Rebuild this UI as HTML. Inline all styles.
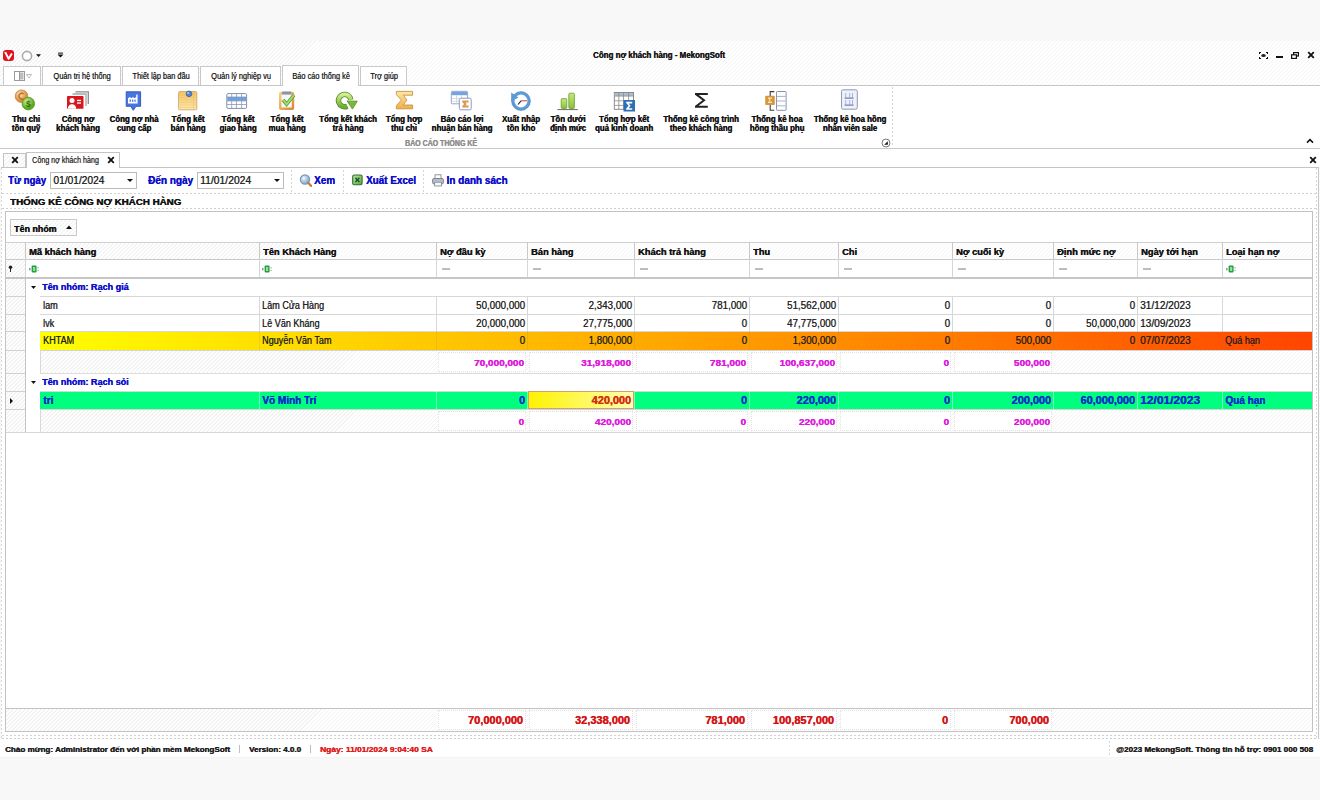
<!DOCTYPE html><html><head><meta charset="utf-8"><style>
*{margin:0;padding:0;box-sizing:border-box}
html,body{width:1320px;height:800px;overflow:hidden;background:#f8f8f8;font-family:"Liberation Sans",sans-serif;color:#000}
div{position:absolute;white-space:nowrap}
</style></head><body>
<div style="left:0px;top:41px;width:1320px;height:45px;background:repeating-linear-gradient(135deg,#ffffff 0px,#ffffff 2.0px,#f5f5f5 2.0px,#f5f5f5 2.83px);"></div>
<div style="left:3px;top:50px;width:11px;height:11px;background:#e0141e;border-radius:3px;"></div>
<svg style="position:absolute;left:3px;top:50px" width="11" height="11" viewBox="0 0 11 11"><path d="M2.4 2.6L5.6 8.8L8.9 3.4" stroke="#fff" stroke-width="1.9" fill="none" stroke-linejoin="round"/><path d="M1.6 2.2L3.6 3.4" stroke="#fff" stroke-width="1.2"/></svg>
<svg style="position:absolute;left:21px;top:50px" width="12" height="12" viewBox="0 0 12 12"><circle cx="6" cy="6" r="4.6" fill="#fff" stroke="#ababab" stroke-width="1.6"/></svg>
<svg style="position:absolute;left:36px;top:54px" width="6" height="4" viewBox="0 0 6 4"><path d="M0 0.3H5L2.5 3Z" fill="#111"/></svg>
<svg style="position:absolute;left:57px;top:52px" width="7" height="6" viewBox="0 0 7 6"><rect x="1" y="0.6" width="5" height="1" fill="#111"/><path d="M0.5 2.6H6.5L3.5 5.6Z" fill="#111"/></svg>
<div style="text-shadow:0.4px 0 0 #141414cc,0 0.25px 0 #14141466;left:593.30px;top:49.19px;width:400px;height:12.32px;line-height:12.32px;text-align:left;font-size:8.8px;font-weight:bold;color:#141414;transform:scaleX(0.904);transform-origin:left center;">Công nợ khách hàng - MekongSoft</div>
<svg style="position:absolute;left:1259px;top:52px" width="9" height="7" viewBox="0 0 9 7"><path d="M0.5 2V0.5H2M7 0.5H8.5V2M8.5 5V6.5H7M2 6.5H0.5V5" stroke="#111" stroke-width="1.1" fill="none"/><ellipse cx="4.5" cy="3.5" rx="2.3" ry="1.6" fill="#222"/></svg>
<div style="left:1276px;top:56px;width:7px;height:2px;background:#111;"></div>
<svg style="position:absolute;left:1291px;top:52px" width="8" height="7" viewBox="0 0 8 7"><rect x="2.6" y="0.6" width="4.8" height="3.4" stroke="#111" stroke-width="1.2" fill="#fff"/><rect x="0.6" y="2.8" width="4.8" height="3.6" stroke="#111" stroke-width="1.2" fill="#fff"/></svg>
<svg style="position:absolute;left:1307px;top:51px" width="8" height="8" viewBox="0 0 8 8"><path d="M1.2 1.2L6.8 6.8M6.8 1.2L1.2 6.8" stroke="#111" stroke-width="1.8"/></svg>
<div style="left:3px;top:66px;width:38px;height:20px;background:#fff;border:1px solid #c9c9c9;border-bottom:none;"></div>
<svg style="position:absolute;left:14px;top:71px" width="18" height="10" viewBox="0 0 18 10"><rect x="0.5" y="0.5" width="10" height="9" fill="#fff" stroke="#9a9a9a"/><rect x="5.5" y="1.5" width="4" height="7" fill="#bdbdbd"/><line x1="5.5" y1="0.5" x2="5.5" y2="9.5" stroke="#9a9a9a"/><path d="M12.5 3.5H17.5L15 7Z" fill="none" stroke="#a8a8a8" stroke-width="0.8"/></svg>
<div style="left:42px;top:66px;width:79px;height:20px;background:#fff;border:1px solid #c9c9c9;border-bottom:none;"></div>
<div style="text-shadow:0.4px 0 0 #1a1a1abb;left:-118.50px;top:71.01px;width:400px;height:11.76px;line-height:11.76px;text-align:center;font-size:8.4px;font-weight:normal;color:#1a1a1a;transform:scaleX(0.885);transform-origin:center center;">Quản trị hệ thống</div>
<div style="left:122px;top:66px;width:77px;height:20px;background:#fff;border:1px solid #c9c9c9;border-bottom:none;"></div>
<div style="text-shadow:0.4px 0 0 #1a1a1abb;left:-39.50px;top:71.01px;width:400px;height:11.76px;line-height:11.76px;text-align:center;font-size:8.4px;font-weight:normal;color:#1a1a1a;transform:scaleX(0.885);transform-origin:center center;">Thiết lập ban đầu</div>
<div style="left:200px;top:66px;width:81px;height:20px;background:#fff;border:1px solid #c9c9c9;border-bottom:none;"></div>
<div style="text-shadow:0.4px 0 0 #1a1a1abb;left:40.50px;top:71.01px;width:400px;height:11.76px;line-height:11.76px;text-align:center;font-size:8.4px;font-weight:normal;color:#1a1a1a;transform:scaleX(0.885);transform-origin:center center;">Quản lý nghiệp vụ</div>
<div style="left:282px;top:65px;width:77px;height:21px;background:#fff;border:1px solid #c9c9c9;border-bottom:none;"></div>
<div style="text-shadow:0.4px 0 0 #1a1a1abb;left:120.50px;top:71.01px;width:400px;height:11.76px;line-height:11.76px;text-align:center;font-size:8.4px;font-weight:normal;color:#1a1a1a;transform:scaleX(0.885);transform-origin:center center;">Báo cáo thống kê</div>
<div style="left:360px;top:66px;width:47px;height:20px;background:#fff;border:1px solid #c9c9c9;border-bottom:none;"></div>
<div style="text-shadow:0.4px 0 0 #1a1a1abb;left:183.50px;top:71.01px;width:400px;height:11.76px;line-height:11.76px;text-align:center;font-size:8.4px;font-weight:normal;color:#1a1a1a;transform:scaleX(0.885);transform-origin:center center;">Trợ giúp</div>
<div style="left:0px;top:85px;width:1320px;height:64px;background:#fff;border-top:1px solid #c6c6c6;border-bottom:1px solid #c8c8c8;"></div>
<div style="left:283px;top:84px;width:75px;height:2px;background:#fff;"></div>
<div style="left:892px;top:87px;width:1px;height:60px;background:repeating-linear-gradient(180deg,#d6d6d6 0px,#d6d6d6 2px,transparent 2px,transparent 4px);"></div>
<div style="text-shadow:0.4px 0 0 #8e8e8ecc,0 0.25px 0 #8e8e8e66;left:241.00px;top:137.62px;width:400px;height:11.48px;line-height:11.48px;text-align:center;font-size:8.2px;font-weight:bold;color:#8e8e8e;transform:scaleX(0.856);transform-origin:center center;">BÁO CÁO THỐNG KÊ</div>
<svg style="position:absolute;left:881px;top:138px" width="10" height="10" viewBox="0 0 10 10"><circle cx="5" cy="5" r="4" fill="#fff" stroke="#6a6a6a" stroke-width="0.9"/><path d="M3.2 6.8H6.8V3.2Z" fill="#111"/></svg>
<svg style="position:absolute;left:1306px;top:138px" width="8" height="6" viewBox="0 0 8 6"><path d="M1 4.6L4 1.6L7 4.6" stroke="#111" stroke-width="1.5" fill="none"/></svg>
<div style="text-shadow:0.4px 0 0 #111111cc,0 0.25px 0 #11111166;left:-174.40px;top:114.31px;width:400px;height:11.76px;line-height:11.76px;text-align:center;font-size:8.4px;font-weight:bold;color:#111111;transform:scaleX(0.940);transform-origin:center center;">Thu chi</div>
<div style="text-shadow:0.4px 0 0 #111111cc,0 0.25px 0 #11111166;left:-174.40px;top:123.31px;width:400px;height:11.76px;line-height:11.76px;text-align:center;font-size:8.4px;font-weight:bold;color:#111111;transform:scaleX(0.940);transform-origin:center center;">tồn quỹ</div>
<div style="text-shadow:0.4px 0 0 #111111cc,0 0.25px 0 #11111166;left:-122.40px;top:114.31px;width:400px;height:11.76px;line-height:11.76px;text-align:center;font-size:8.4px;font-weight:bold;color:#111111;transform:scaleX(0.940);transform-origin:center center;">Công nợ</div>
<div style="text-shadow:0.4px 0 0 #111111cc,0 0.25px 0 #11111166;left:-122.40px;top:123.31px;width:400px;height:11.76px;line-height:11.76px;text-align:center;font-size:8.4px;font-weight:bold;color:#111111;transform:scaleX(0.940);transform-origin:center center;">khách hàng</div>
<div style="text-shadow:0.4px 0 0 #111111cc,0 0.25px 0 #11111166;left:-66.50px;top:114.31px;width:400px;height:11.76px;line-height:11.76px;text-align:center;font-size:8.4px;font-weight:bold;color:#111111;transform:scaleX(0.940);transform-origin:center center;">Công nợ nhà</div>
<div style="text-shadow:0.4px 0 0 #111111cc,0 0.25px 0 #11111166;left:-66.50px;top:123.31px;width:400px;height:11.76px;line-height:11.76px;text-align:center;font-size:8.4px;font-weight:bold;color:#111111;transform:scaleX(0.940);transform-origin:center center;">cung cấp</div>
<div style="text-shadow:0.4px 0 0 #111111cc,0 0.25px 0 #11111166;left:-12.40px;top:114.31px;width:400px;height:11.76px;line-height:11.76px;text-align:center;font-size:8.4px;font-weight:bold;color:#111111;transform:scaleX(0.940);transform-origin:center center;">Tổng kết</div>
<div style="text-shadow:0.4px 0 0 #111111cc,0 0.25px 0 #11111166;left:-12.40px;top:123.31px;width:400px;height:11.76px;line-height:11.76px;text-align:center;font-size:8.4px;font-weight:bold;color:#111111;transform:scaleX(0.940);transform-origin:center center;">bán hàng</div>
<div style="text-shadow:0.4px 0 0 #111111cc,0 0.25px 0 #11111166;left:37.50px;top:114.31px;width:400px;height:11.76px;line-height:11.76px;text-align:center;font-size:8.4px;font-weight:bold;color:#111111;transform:scaleX(0.940);transform-origin:center center;">Tổng kết</div>
<div style="text-shadow:0.4px 0 0 #111111cc,0 0.25px 0 #11111166;left:37.50px;top:123.31px;width:400px;height:11.76px;line-height:11.76px;text-align:center;font-size:8.4px;font-weight:bold;color:#111111;transform:scaleX(0.940);transform-origin:center center;">giao hàng</div>
<div style="text-shadow:0.4px 0 0 #111111cc,0 0.25px 0 #11111166;left:86.50px;top:114.31px;width:400px;height:11.76px;line-height:11.76px;text-align:center;font-size:8.4px;font-weight:bold;color:#111111;transform:scaleX(0.940);transform-origin:center center;">Tổng kết</div>
<div style="text-shadow:0.4px 0 0 #111111cc,0 0.25px 0 #11111166;left:86.50px;top:123.31px;width:400px;height:11.76px;line-height:11.76px;text-align:center;font-size:8.4px;font-weight:bold;color:#111111;transform:scaleX(0.940);transform-origin:center center;">mua hàng</div>
<div style="text-shadow:0.4px 0 0 #111111cc,0 0.25px 0 #11111166;left:147.50px;top:114.31px;width:400px;height:11.76px;line-height:11.76px;text-align:center;font-size:8.4px;font-weight:bold;color:#111111;transform:scaleX(0.940);transform-origin:center center;">Tổng kết khách</div>
<div style="text-shadow:0.4px 0 0 #111111cc,0 0.25px 0 #11111166;left:147.50px;top:123.31px;width:400px;height:11.76px;line-height:11.76px;text-align:center;font-size:8.4px;font-weight:bold;color:#111111;transform:scaleX(0.940);transform-origin:center center;">trả hàng</div>
<div style="text-shadow:0.4px 0 0 #111111cc,0 0.25px 0 #11111166;left:204.00px;top:114.31px;width:400px;height:11.76px;line-height:11.76px;text-align:center;font-size:8.4px;font-weight:bold;color:#111111;transform:scaleX(0.940);transform-origin:center center;">Tổng hợp</div>
<div style="text-shadow:0.4px 0 0 #111111cc,0 0.25px 0 #11111166;left:204.00px;top:123.31px;width:400px;height:11.76px;line-height:11.76px;text-align:center;font-size:8.4px;font-weight:bold;color:#111111;transform:scaleX(0.940);transform-origin:center center;">thu chi</div>
<div style="text-shadow:0.4px 0 0 #111111cc,0 0.25px 0 #11111166;left:262.00px;top:114.31px;width:400px;height:11.76px;line-height:11.76px;text-align:center;font-size:8.4px;font-weight:bold;color:#111111;transform:scaleX(0.940);transform-origin:center center;">Báo cáo lợi</div>
<div style="text-shadow:0.4px 0 0 #111111cc,0 0.25px 0 #11111166;left:262.00px;top:123.31px;width:400px;height:11.76px;line-height:11.76px;text-align:center;font-size:8.4px;font-weight:bold;color:#111111;transform:scaleX(0.940);transform-origin:center center;">nhuận bán hàng</div>
<div style="text-shadow:0.4px 0 0 #111111cc,0 0.25px 0 #11111166;left:321.00px;top:114.31px;width:400px;height:11.76px;line-height:11.76px;text-align:center;font-size:8.4px;font-weight:bold;color:#111111;transform:scaleX(0.940);transform-origin:center center;">Xuất nhập</div>
<div style="text-shadow:0.4px 0 0 #111111cc,0 0.25px 0 #11111166;left:321.00px;top:123.31px;width:400px;height:11.76px;line-height:11.76px;text-align:center;font-size:8.4px;font-weight:bold;color:#111111;transform:scaleX(0.940);transform-origin:center center;">tồn kho</div>
<div style="text-shadow:0.4px 0 0 #111111cc,0 0.25px 0 #11111166;left:367.80px;top:114.31px;width:400px;height:11.76px;line-height:11.76px;text-align:center;font-size:8.4px;font-weight:bold;color:#111111;transform:scaleX(0.940);transform-origin:center center;">Tồn dưới</div>
<div style="text-shadow:0.4px 0 0 #111111cc,0 0.25px 0 #11111166;left:367.80px;top:123.31px;width:400px;height:11.76px;line-height:11.76px;text-align:center;font-size:8.4px;font-weight:bold;color:#111111;transform:scaleX(0.940);transform-origin:center center;">định mức</div>
<div style="text-shadow:0.4px 0 0 #111111cc,0 0.25px 0 #11111166;left:424.00px;top:114.31px;width:400px;height:11.76px;line-height:11.76px;text-align:center;font-size:8.4px;font-weight:bold;color:#111111;transform:scaleX(0.940);transform-origin:center center;">Tổng hợp kết</div>
<div style="text-shadow:0.4px 0 0 #111111cc,0 0.25px 0 #11111166;left:424.00px;top:123.31px;width:400px;height:11.76px;line-height:11.76px;text-align:center;font-size:8.4px;font-weight:bold;color:#111111;transform:scaleX(0.940);transform-origin:center center;">quả kinh doanh</div>
<div style="text-shadow:0.4px 0 0 #111111cc,0 0.25px 0 #11111166;left:501.00px;top:114.31px;width:400px;height:11.76px;line-height:11.76px;text-align:center;font-size:8.4px;font-weight:bold;color:#111111;transform:scaleX(0.940);transform-origin:center center;">Thống kê công trình</div>
<div style="text-shadow:0.4px 0 0 #111111cc,0 0.25px 0 #11111166;left:501.00px;top:123.31px;width:400px;height:11.76px;line-height:11.76px;text-align:center;font-size:8.4px;font-weight:bold;color:#111111;transform:scaleX(0.940);transform-origin:center center;">theo khách hàng</div>
<div style="text-shadow:0.4px 0 0 #111111cc,0 0.25px 0 #11111166;left:576.60px;top:114.31px;width:400px;height:11.76px;line-height:11.76px;text-align:center;font-size:8.4px;font-weight:bold;color:#111111;transform:scaleX(0.940);transform-origin:center center;">Thống kê hoa</div>
<div style="text-shadow:0.4px 0 0 #111111cc,0 0.25px 0 #11111166;left:576.60px;top:123.31px;width:400px;height:11.76px;line-height:11.76px;text-align:center;font-size:8.4px;font-weight:bold;color:#111111;transform:scaleX(0.940);transform-origin:center center;">hồng thầu phụ</div>
<div style="text-shadow:0.4px 0 0 #111111cc,0 0.25px 0 #11111166;left:650.00px;top:114.31px;width:400px;height:11.76px;line-height:11.76px;text-align:center;font-size:8.4px;font-weight:bold;color:#111111;transform:scaleX(0.940);transform-origin:center center;">Thống kê hoa hồng</div>
<div style="text-shadow:0.4px 0 0 #111111cc,0 0.25px 0 #11111166;left:650.00px;top:123.31px;width:400px;height:11.76px;line-height:11.76px;text-align:center;font-size:8.4px;font-weight:bold;color:#111111;transform:scaleX(0.940);transform-origin:center center;">nhân viên sale</div>
<svg style="position:absolute;left:12px;top:88px" width="24" height="24" viewBox="0 0 24 24"><g transform="translate(-12,-88)"><defs><radialGradient id="g1" cx="40%" cy="35%"><stop offset="0" stop-color="#fde6bc"/><stop offset="1" stop-color="#dc8e40"/></radialGradient>
<radialGradient id="g2" cx="40%" cy="35%"><stop offset="0" stop-color="#d4f29a"/><stop offset="1" stop-color="#5ea822"/></radialGradient></defs>
<circle cx="21.5" cy="96.2" r="6.3" fill="url(#g1)" stroke="#cc8338" stroke-width="0.8"/>
<path d="M23.6 93.8A2.9 2.9 0 1 0 23.6 98.6" stroke="#b86e24" stroke-width="1.4" fill="none"/>
<circle cx="28.3" cy="103.6" r="6.3" fill="url(#g2)" stroke="#4f9a1c" stroke-width="0.8"/>
<text x="28.3" y="106.8" font-size="8.5" text-anchor="middle" fill="#2f6d0c" font-family="Liberation Sans" font-weight="bold">$</text></g></svg>
<svg style="position:absolute;left:65px;top:90px" width="26" height="21" viewBox="0 0 26 21"><g transform="translate(-65,-90)"><path d="M75.5 91.8H88.3V104" fill="none" stroke="#8c8c8c" stroke-width="1.3"/>
<path d="M72.5 94H86V106" fill="none" stroke="#a6a6a6" stroke-width="1.3"/>
<rect x="67" y="96" width="16.5" height="12.8" fill="#d8161e" rx="0.8"/>
<circle cx="72" cy="100.4" r="2.5" fill="#fff"/><path d="M67.8 108.8C68 105.4 70 104.2 72 104.2C74 104.2 76 105.4 76.2 108.8Z" fill="#fff"/>
<rect x="77" y="99.8" width="4" height="1.3" fill="#fff"/><rect x="77" y="102.4" width="4" height="1.3" fill="#fff"/></g></svg>
<svg style="position:absolute;left:124px;top:90px" width="19" height="22" viewBox="0 0 19 22"><g transform="translate(-124,-90)"><path d="M126.2 91.8H140.6V106.3H136L133.3 110.3L130.6 106.3H126.2Z" fill="#4676e0" stroke="#2f52b4" stroke-width="0.9" stroke-linejoin="round"/>
<path d="M128 103.6V98.2L130 97L131.5 98.2L133 97L134.5 98.2L136.2 97V94.6H137.6V103.6Z" fill="#fff"/>
<rect x="129.6" y="99.6" width="1.3" height="2.2" fill="#4676e0"/><rect x="132" y="99.6" width="1.3" height="2.2" fill="#4676e0"/><rect x="134.4" y="99.6" width="1.3" height="2.2" fill="#4676e0"/></g></svg>
<svg style="position:absolute;left:177px;top:89px" width="22" height="23" viewBox="0 0 22 23"><g transform="translate(-177,-89)"><defs><linearGradient id="g3" x1="0" y1="0" x2="0" y2="1"><stop offset="0" stop-color="#f6c462"/><stop offset="1" stop-color="#fde9ae"/></linearGradient></defs>
<rect x="178.6" y="91.6" width="18.2" height="18.2" fill="url(#g3)" stroke="#d4ac70" stroke-width="1" rx="1"/>
<g stroke="#eab868" stroke-width="0.5" opacity="0.8"><line x1="180" y1="95" x2="195.5" y2="95"/><line x1="180" y1="97.5" x2="195.5" y2="97.5"/><line x1="180" y1="100" x2="195.5" y2="100"/><line x1="180" y1="102.5" x2="195.5" y2="102.5"/><line x1="180" y1="105" x2="195.5" y2="105"/><line x1="180" y1="107.5" x2="195.5" y2="107.5"/><line x1="193.5" y1="93" x2="193.5" y2="109"/></g>
<circle cx="189" cy="93.8" r="2.9" fill="#4f86cc" stroke="#2d5590" stroke-width="0.6"/><circle cx="188.2" cy="93" r="1" fill="#a8d0f0"/></g></svg>
<svg style="position:absolute;left:225px;top:92px" width="23" height="18" viewBox="0 0 23 18"><g transform="translate(-225,-92)"><rect x="226.8" y="93.6" width="19.8" height="14.8" fill="#fff" stroke="#8190ae" stroke-width="1" rx="1.2"/>
<rect x="227.3" y="97" width="18.8" height="3.9" fill="#6aa2e4"/>
<g stroke="#8898b8" stroke-width="0.8"><line x1="227" y1="97" x2="246.5" y2="97"/><line x1="227" y1="100.9" x2="246.5" y2="100.9"/><line x1="227" y1="104.5" x2="246.5" y2="104.5"/>
<line x1="231.7" y1="94" x2="231.7" y2="108"/><line x1="236.4" y1="94" x2="236.4" y2="108"/><line x1="241.6" y1="94" x2="241.6" y2="108"/></g></g></svg>
<svg style="position:absolute;left:277px;top:89px" width="19" height="23" viewBox="0 0 19 23"><g transform="translate(-277,-89)"><defs><linearGradient id="g7" x1="0" y1="0" x2="1" y2="1"><stop offset="0" stop-color="#f4cf7a"/><stop offset="1" stop-color="#d98a38"/></linearGradient></defs>
<rect x="280.2" y="93" width="12.8" height="15.8" fill="#f6f6fa" stroke="url(#g7)" stroke-width="2.4" rx="0.8"/>
<path d="M282.4 91.6H290.8L291.6 94.6H281.6Z" fill="#8a94a8"/>
<path d="M283 99.8L286.6 104.2L294 95" stroke="#5c9a2a" stroke-width="3.4" fill="none"/>
<path d="M283 99.8L286.6 104.2L294 95" stroke="#a6e070" stroke-width="1.8" fill="none"/></g></svg>
<svg style="position:absolute;left:335px;top:90px" width="24" height="21" viewBox="0 0 24 21"><g transform="translate(-335,-90)"><defs><linearGradient id="g4" x1="0" y1="0" x2="0" y2="1"><stop offset="0" stop-color="#d2f090"/><stop offset="1" stop-color="#6cae2e"/></linearGradient></defs>
<path d="M347.3 106.2A6.2 6.2 0 1 1 350.8 99.6" stroke="#5a8a2c" stroke-width="5.4" fill="none"/>
<path d="M347.3 106.2A6.2 6.2 0 1 1 350.8 99.6" stroke="url(#g4)" stroke-width="3.8" fill="none"/>
<path d="M347.1 100.9L357.3 101.2L352.4 109.1Z" fill="#78ba36" stroke="#5a8a2c" stroke-width="0.8" stroke-linejoin="round"/></g></svg>
<svg style="position:absolute;left:395px;top:90px" width="19" height="21" viewBox="0 0 19 21"><g transform="translate(-395,-90)"><defs><linearGradient id="g5" x1="0" y1="0" x2="0" y2="1"><stop offset="0" stop-color="#fde8a8"/><stop offset="1" stop-color="#eeae4c"/></linearGradient></defs>
<path d="M396.4 91.4H412.6V95.2H403.4L406.8 100.1L403.2 105H412.6V108.8H396.4V105.6L401.4 100.1L396.4 94.6Z" fill="url(#g5)" stroke="#c8923e" stroke-width="0.9" stroke-linejoin="round"/></g></svg>
<svg style="position:absolute;left:450px;top:90px" width="23" height="22" viewBox="0 0 23 22"><g transform="translate(-450,-90)"><rect x="451.3" y="91.3" width="16.3" height="12.5" fill="#fff" stroke="#8a9ac0" stroke-width="0.9" rx="1"/>
<rect x="451.8" y="91.8" width="15.3" height="3.4" fill="#72a4e0"/>
<g stroke="#c4cce0" stroke-width="0.7"><line x1="452" y1="98.5" x2="467" y2="98.5"/><line x1="452" y1="101.2" x2="467" y2="101.2"/><line x1="456.5" y1="95" x2="456.5" y2="103.5"/><line x1="461.5" y1="95" x2="461.5" y2="103.5"/></g>
<rect x="459.3" y="98.2" width="11.9" height="11.6" fill="#fff" stroke="#8d9cbc" stroke-width="1" rx="1.4"/>
<path d="M462.3 100.6H468.6V102.6H465.4L466.8 104.1L465.4 105.6H468.6V107.6H462.3V106L464.2 104.1L462.3 102.2Z" fill="#d89a4c"/></g></svg>
<svg style="position:absolute;left:509px;top:89px" width="23" height="23" viewBox="0 0 23 23"><g transform="translate(-509,-89)"><circle cx="521" cy="101" r="8" fill="#fff" stroke="#5c9ad8" stroke-width="3"/>
<circle cx="521" cy="101" r="9.5" fill="none" stroke="#3f74b0" stroke-width="0.6" opacity="0.7"/>
<path d="M511.2 92.4V101.5L518.5 97.5Z" fill="#5c9ad8"/>
<path d="M518 104.5L521 100.8" stroke="#222" stroke-width="1.1"/><path d="M521 100.8H527.2" stroke="#c85050" stroke-width="1.1"/></g></svg>
<svg style="position:absolute;left:556px;top:91px" width="23" height="20" viewBox="0 0 23 20"><g transform="translate(-556,-91)"><defs><linearGradient id="g6" x1="0" y1="0" x2="0" y2="1"><stop offset="0" stop-color="#c6ea7a"/><stop offset="1" stop-color="#88c236"/></linearGradient></defs>
<rect x="561.2" y="98.6" width="5.6" height="9.8" fill="url(#g6)" stroke="#6a9a34" stroke-width="0.8" rx="1"/>
<rect x="568.8" y="93.2" width="5.6" height="15.2" fill="url(#g6)" stroke="#6a9a34" stroke-width="0.8" rx="1"/>
<line x1="557.4" y1="109.6" x2="577.8" y2="109.6" stroke="#6a6a6a" stroke-width="1"/></g></svg>
<svg style="position:absolute;left:613px;top:91px" width="24" height="22" viewBox="0 0 24 22"><g transform="translate(-613,-91)"><rect x="614.3" y="92.5" width="19.2" height="16.8" fill="#fff" stroke="#808080" stroke-width="0.9"/>
<rect x="614.8" y="93" width="18.2" height="3" fill="#aebdcc"/>
<g stroke="#8a8a8a" stroke-width="0.8"><line x1="614.5" y1="96.1" x2="633.2" y2="96.1"/><line x1="614.5" y1="100.8" x2="633.2" y2="100.8"/><line x1="614.5" y1="105.4" x2="633.2" y2="105.4"/>
<line x1="618.8" y1="92.5" x2="618.8" y2="109.2"/><line x1="623.5" y1="92.5" x2="623.5" y2="109.2"/><line x1="628.6" y1="92.5" x2="628.6" y2="109.2"/></g>
<rect x="623.5" y="100" width="11.5" height="11.5" fill="#2f6fb6"/>
<path d="M626.2 101.8H632.2V103.4H628.6L630.6 105.8L628.6 108.2H632.2V109.8H626.2V108.6L628.6 105.8L626.2 103Z" fill="#fff"/></g></svg>
<svg style="position:absolute;left:693px;top:91px" width="17" height="19" viewBox="0 0 17 19"><g transform="translate(-693,-91)"><path d="M695 93.9H707.8M695.6 93.9L704 100.3L695.6 106.7M695 106.7H707.8" stroke="#222" stroke-width="2" fill="none" stroke-linejoin="miter"/></g></svg>
<svg style="position:absolute;left:764px;top:90px" width="24" height="22" viewBox="0 0 24 22"><g transform="translate(-764,-90)"><path d="M774.3 91.6H770.2V110.2H774.3" stroke="#3a3a3a" stroke-width="1.1" fill="none"/>
<rect x="776.5" y="91.5" width="9.6" height="18.8" fill="#fff" stroke="#8a94b0" stroke-width="1" rx="0.6"/>
<g stroke="#a0a8c4" stroke-width="0.9"><line x1="777" y1="96.4" x2="785.6" y2="96.4"/><line x1="777" y1="101" x2="785.6" y2="101"/><line x1="777" y1="105.8" x2="785.6" y2="105.8"/></g>
<rect x="765.2" y="95.8" width="9.6" height="9.1" fill="#d8963e" rx="1"/>
<path d="M768 97.6H772V98.8H769.6L770.8 100.3L769.6 101.8H772V103H768V102L769.6 100.3L768 98.6Z" fill="#fbe2b8"/></g></svg>
<svg style="position:absolute;left:840px;top:88px" width="19" height="23" viewBox="0 0 19 23"><g transform="translate(-840,-88)"><rect x="841.5" y="89.8" width="15.8" height="19.4" fill="#eef0fa" stroke="#9298b4" stroke-width="1" rx="1.6"/>
<g fill="#a8b4d8"><rect x="845.2" y="93" width="1" height="4.6"/><rect x="849.2" y="93" width="1" height="4.6"/><rect x="852" y="93" width="1" height="4.6"/>
<rect x="845.2" y="100" width="1" height="4.6"/><rect x="849.2" y="100" width="1" height="4.6"/><rect x="852" y="100" width="1" height="4.6"/></g>
<g fill="#5a68a8"><rect x="844.6" y="97.6" width="9" height="1"/><rect x="844.6" y="104.6" width="9" height="1"/></g></g></svg>
<div style="left:0px;top:149px;width:1320px;height:18px;background:#fff;"></div>
<div style="left:0px;top:148px;width:1320px;height:1px;background:#c8c8c8;"></div>
<div style="left:3px;top:153px;width:23px;height:14px;border:1px solid #c4c4c4;border-bottom:none;background:repeating-linear-gradient(135deg,#ffffff 0px,#ffffff 2.0px,#f5f5f5 2.0px,#f5f5f5 2.83px);"></div>
<svg style="position:absolute;left:11px;top:156px" width="8" height="8" viewBox="0 0 8 8"><path d="M1.2 1.2L6.8 6.8M6.8 1.2L1.2 6.8" stroke="#111" stroke-width="1.8"/></svg>
<div style="left:26px;top:152px;width:94px;height:15px;background:#fff;border:1px solid #c4c4c4;border-bottom:none;"></div>
<div style="text-shadow:0.4px 0 0 #2a2a2abb;left:32.00px;top:154.00px;width:400px;height:12.04px;line-height:12.04px;text-align:left;font-size:8.6px;font-weight:normal;color:#2a2a2a;transform:scaleX(0.833);transform-origin:left center;">Công nợ khách hàng</div>
<svg style="position:absolute;left:107px;top:156px" width="8" height="8" viewBox="0 0 8 8"><path d="M1.2 1.2L6.8 6.8M6.8 1.2L1.2 6.8" stroke="#111" stroke-width="1.8"/></svg>
<svg style="position:absolute;left:1309px;top:156px" width="8" height="8" viewBox="0 0 8 8"><path d="M1.2 1.2L6.8 6.8M6.8 1.2L1.2 6.8" stroke="#111" stroke-width="1.8"/></svg>
<div style="left:1px;top:167px;width:1318px;height:572px;background:#fff;border-top:1px solid #c4c4c4;border-right:1px solid #c8c8c8;"></div>
<div style="left:27px;top:166px;width:92px;height:2px;background:#fff;"></div>
<div style="text-shadow:0.4px 0 0 #0c0cc8cc,0 0.25px 0 #0c0cc866;left:8.40px;top:174.14px;width:400px;height:14.0px;line-height:14.0px;text-align:left;font-size:10px;font-weight:bold;color:#0c0cc8;transform:scaleX(0.963);transform-origin:left center;">Từ ngày</div>
<div style="left:50px;top:172px;width:87px;height:17px;background:#fff;border:1px solid #bcbcbc;"></div>
<div style="text-shadow:0.4px 0 0 #222222bb;left:53.30px;top:173.93px;width:400px;height:14.28px;line-height:14.28px;text-align:left;font-size:10.2px;font-weight:normal;color:#222;">01/01/2024</div>
<svg style="position:absolute;left:127px;top:179px" width="6" height="4" viewBox="0 0 6 4"><path d="M0 0H6L3 3Z" fill="#111"/></svg>
<div style="text-shadow:0.4px 0 0 #0c0cc8cc,0 0.25px 0 #0c0cc866;left:148.00px;top:174.14px;width:400px;height:14.0px;line-height:14.0px;text-align:left;font-size:10px;font-weight:bold;color:#0c0cc8;">Đến ngày</div>
<div style="left:197px;top:172px;width:87px;height:17px;background:#fff;border:1px solid #bcbcbc;"></div>
<div style="text-shadow:0.4px 0 0 #222222bb;left:200.30px;top:173.93px;width:400px;height:14.28px;line-height:14.28px;text-align:left;font-size:10.2px;font-weight:normal;color:#222;transform:scaleX(1.015);transform-origin:left center;">11/01/2024</div>
<svg style="position:absolute;left:274px;top:179px" width="6" height="4" viewBox="0 0 6 4"><path d="M0 0H6L3 3Z" fill="#111"/></svg>
<div style="left:291px;top:170px;width:1px;height:22px;background:repeating-linear-gradient(180deg,#d6d6d6 0px,#d6d6d6 2px,transparent 2px,transparent 4px);"></div>
<div style="left:343px;top:170px;width:1px;height:22px;background:repeating-linear-gradient(180deg,#d6d6d6 0px,#d6d6d6 2px,transparent 2px,transparent 4px);"></div>
<div style="left:423px;top:170px;width:1px;height:22px;background:repeating-linear-gradient(180deg,#d6d6d6 0px,#d6d6d6 2px,transparent 2px,transparent 4px);"></div>
<svg style="position:absolute;left:298px;top:173px" width="14" height="15" viewBox="0 0 14 15"><defs><radialGradient id="mg" cx="35%" cy="35%"><stop offset="0" stop-color="#f4faff"/><stop offset="1" stop-color="#8fb8de"/></radialGradient></defs><circle cx="7" cy="6.5" r="4.6" fill="url(#mg)" stroke="#7c94ac" stroke-width="1.2"/><path d="M10.2 9.8L13 12.8" stroke="#c87a3c" stroke-width="2.4" stroke-linecap="round"/></svg>
<div style="text-shadow:0.4px 0 0 #0c0cc8cc,0 0.25px 0 #0c0cc866;left:313.60px;top:174.14px;width:400px;height:14.0px;line-height:14.0px;text-align:left;font-size:10px;font-weight:bold;color:#0c0cc8;transform:scaleX(0.994);transform-origin:left center;">Xem</div>
<svg style="position:absolute;left:352px;top:174px" width="11" height="12" viewBox="0 0 11 12"><defs><linearGradient id="xg" x1="0" y1="0" x2="1" y2="1"><stop offset="0" stop-color="#bfe8a8"/><stop offset="1" stop-color="#4fa83c"/></linearGradient></defs><rect x="0.7" y="1" width="9.4" height="9.8" rx="1.6" fill="url(#xg)" stroke="#2f6e2a" stroke-width="1.1"/><path d="M3.4 3.8L7.4 8M7.4 3.8L3.4 8" stroke="#1f4f1f" stroke-width="1.3"/></svg>
<div style="text-shadow:0.4px 0 0 #0c0cc8cc,0 0.25px 0 #0c0cc866;left:365.50px;top:174.14px;width:400px;height:14.0px;line-height:14.0px;text-align:left;font-size:10px;font-weight:bold;color:#0c0cc8;transform:scaleX(0.988);transform-origin:left center;">Xuất Excel</div>
<svg style="position:absolute;left:432px;top:174px" width="12" height="13" viewBox="0 0 12 13"><rect x="3" y="0.8" width="6" height="4.4" fill="#fff" stroke="#8a8a8a" stroke-width="0.9"/><rect x="0.6" y="4.6" width="10.8" height="5.2" rx="1.2" fill="#b8c2cc" stroke="#6d7780" stroke-width="0.9"/><rect x="2.6" y="8.2" width="6.8" height="3.8" fill="#f4f6f8" stroke="#7a848c" stroke-width="0.8"/></svg>
<div style="text-shadow:0.4px 0 0 #0c0cc8cc,0 0.25px 0 #0c0cc866;left:446.40px;top:174.14px;width:400px;height:14.0px;line-height:14.0px;text-align:left;font-size:10px;font-weight:bold;color:#0c0cc8;">In danh sách</div>
<div style="left:2px;top:193px;width:1314px;height:1px;background:repeating-linear-gradient(90deg,#cfcfcf 0px,#cfcfcf 2px,transparent 2px,transparent 4px);"></div>
<div style="text-shadow:0.4px 0 0 #111111cc,0 0.25px 0 #11111166;left:10.20px;top:195.05px;width:400px;height:13.44px;line-height:13.44px;text-align:left;font-size:9.6px;font-weight:bold;color:#111;transform:scaleX(1.019);transform-origin:left center;">THỐNG KÊ CÔNG NỢ KHÁCH HÀNG</div>
<div style="left:2px;top:208px;width:1314px;height:1px;background:repeating-linear-gradient(90deg,#cfcfcf 0px,#cfcfcf 2px,transparent 2px,transparent 4px);"></div>
<div style="left:2px;top:735px;width:1314px;height:1px;background:repeating-linear-gradient(90deg,#cfcfcf 0px,#cfcfcf 2px,transparent 2px,transparent 4px);"></div>
<div style="left:2px;top:738px;width:1316px;height:1px;background:repeating-linear-gradient(90deg,#cfcfcf 0px,#cfcfcf 2px,transparent 2px,transparent 4px);"></div>
<div style="left:1316px;top:168px;width:1px;height:570px;background:repeating-linear-gradient(180deg,#d6d6d6 0px,#d6d6d6 2px,transparent 2px,transparent 4px);"></div>
<div style="left:5px;top:211px;width:1308px;height:521px;background:#fff;border:1px solid #c2c2c2;"></div>
<div style="left:10px;top:219px;width:67px;height:17px;border:1px solid #c8c8c8;background:repeating-linear-gradient(135deg,#ffffff 0px,#ffffff 2.0px,#f5f5f5 2.0px,#f5f5f5 2.83px);"></div>
<div style="text-shadow:0.4px 0 0 #111111cc,0 0.25px 0 #11111166;left:13.80px;top:221.54px;width:400px;height:13.72px;line-height:13.72px;text-align:left;font-size:9.8px;font-weight:bold;color:#111;transform:scaleX(0.908);transform-origin:left center;">Tên nhóm</div>
<svg style="position:absolute;left:66px;top:225px" width="6" height="5" viewBox="0 0 6 5"><path d="M0 4H6L3 0.6Z" fill="#111"/></svg>
<div style="left:6px;top:242px;width:1306px;height:18px;background:repeating-linear-gradient(135deg,#ffffff 0px,#ffffff 2.0px,#f5f5f5 2.0px,#f5f5f5 2.83px);border-top:1px solid #d0d0d0;border-bottom:1px solid #c8c8c8;"></div>
<div style="left:25px;top:242px;width:1px;height:17px;background:#c8c8c8;"></div>
<div style="left:259px;top:242px;width:1px;height:17px;background:#c8c8c8;"></div>
<div style="left:436px;top:242px;width:1px;height:17px;background:#c8c8c8;"></div>
<div style="left:527px;top:242px;width:1px;height:17px;background:#c8c8c8;"></div>
<div style="left:634px;top:242px;width:1px;height:17px;background:#c8c8c8;"></div>
<div style="left:749px;top:242px;width:1px;height:17px;background:#c8c8c8;"></div>
<div style="left:838px;top:242px;width:1px;height:17px;background:#c8c8c8;"></div>
<div style="left:952px;top:242px;width:1px;height:17px;background:#c8c8c8;"></div>
<div style="left:1053px;top:242px;width:1px;height:17px;background:#c8c8c8;"></div>
<div style="left:1137px;top:242px;width:1px;height:17px;background:#c8c8c8;"></div>
<div style="left:1222px;top:242px;width:1px;height:17px;background:#c8c8c8;"></div>
<div style="text-shadow:0.4px 0 0 #111111cc,0 0.25px 0 #11111166;left:29.20px;top:244.55px;width:400px;height:13.44px;line-height:13.44px;text-align:left;font-size:9.6px;font-weight:bold;color:#111;transform:scaleX(0.970);transform-origin:left center;">Mã khách hàng</div>
<div style="text-shadow:0.4px 0 0 #111111cc,0 0.25px 0 #11111166;left:263.20px;top:244.55px;width:400px;height:13.44px;line-height:13.44px;text-align:left;font-size:9.6px;font-weight:bold;color:#111;transform:scaleX(0.970);transform-origin:left center;">Tên Khách Hàng</div>
<div style="text-shadow:0.4px 0 0 #111111cc,0 0.25px 0 #11111166;left:440.20px;top:244.55px;width:400px;height:13.44px;line-height:13.44px;text-align:left;font-size:9.6px;font-weight:bold;color:#111;transform:scaleX(0.970);transform-origin:left center;">Nợ đầu kỳ</div>
<div style="text-shadow:0.4px 0 0 #111111cc,0 0.25px 0 #11111166;left:531.20px;top:244.55px;width:400px;height:13.44px;line-height:13.44px;text-align:left;font-size:9.6px;font-weight:bold;color:#111;transform:scaleX(0.970);transform-origin:left center;">Bán hàng</div>
<div style="text-shadow:0.4px 0 0 #111111cc,0 0.25px 0 #11111166;left:638.20px;top:244.55px;width:400px;height:13.44px;line-height:13.44px;text-align:left;font-size:9.6px;font-weight:bold;color:#111;transform:scaleX(0.970);transform-origin:left center;">Khách trả hàng</div>
<div style="text-shadow:0.4px 0 0 #111111cc,0 0.25px 0 #11111166;left:753.20px;top:244.55px;width:400px;height:13.44px;line-height:13.44px;text-align:left;font-size:9.6px;font-weight:bold;color:#111;transform:scaleX(0.970);transform-origin:left center;">Thu</div>
<div style="text-shadow:0.4px 0 0 #111111cc,0 0.25px 0 #11111166;left:842.20px;top:244.55px;width:400px;height:13.44px;line-height:13.44px;text-align:left;font-size:9.6px;font-weight:bold;color:#111;transform:scaleX(0.970);transform-origin:left center;">Chi</div>
<div style="text-shadow:0.4px 0 0 #111111cc,0 0.25px 0 #11111166;left:956.20px;top:244.55px;width:400px;height:13.44px;line-height:13.44px;text-align:left;font-size:9.6px;font-weight:bold;color:#111;transform:scaleX(0.970);transform-origin:left center;">Nợ cuối kỳ</div>
<div style="text-shadow:0.4px 0 0 #111111cc,0 0.25px 0 #11111166;left:1057.20px;top:244.55px;width:400px;height:13.44px;line-height:13.44px;text-align:left;font-size:9.6px;font-weight:bold;color:#111;transform:scaleX(0.970);transform-origin:left center;">Định mức nợ</div>
<div style="text-shadow:0.4px 0 0 #111111cc,0 0.25px 0 #11111166;left:1141.20px;top:244.55px;width:400px;height:13.44px;line-height:13.44px;text-align:left;font-size:9.6px;font-weight:bold;color:#111;transform:scaleX(0.970);transform-origin:left center;">Ngày tới hạn</div>
<div style="text-shadow:0.4px 0 0 #111111cc,0 0.25px 0 #11111166;left:1226.20px;top:244.55px;width:400px;height:13.44px;line-height:13.44px;text-align:left;font-size:9.6px;font-weight:bold;color:#111;transform:scaleX(0.970);transform-origin:left center;">Loại hạn nợ</div>
<div style="left:25px;top:259px;width:1px;height:20px;background:#d6d6d6;"></div>
<div style="left:259px;top:259px;width:1px;height:20px;background:#d6d6d6;"></div>
<div style="left:436px;top:259px;width:1px;height:20px;background:#d6d6d6;"></div>
<div style="left:527px;top:259px;width:1px;height:20px;background:#d6d6d6;"></div>
<div style="left:634px;top:259px;width:1px;height:20px;background:#d6d6d6;"></div>
<div style="left:749px;top:259px;width:1px;height:20px;background:#d6d6d6;"></div>
<div style="left:838px;top:259px;width:1px;height:20px;background:#d6d6d6;"></div>
<div style="left:952px;top:259px;width:1px;height:20px;background:#d6d6d6;"></div>
<div style="left:1053px;top:259px;width:1px;height:20px;background:#d6d6d6;"></div>
<div style="left:1137px;top:259px;width:1px;height:20px;background:#d6d6d6;"></div>
<div style="left:1222px;top:259px;width:1px;height:20px;background:#d6d6d6;"></div>
<div style="left:6px;top:260px;width:19px;height:17px;background:repeating-linear-gradient(135deg,#ffffff 0px,#ffffff 2.0px,#f3f3f3 2.0px,#f3f3f3 2.83px);"></div>
<div style="left:6px;top:277px;width:1306px;height:2px;background:#c6c6c6;"></div>
<svg style="position:absolute;left:8px;top:265px" width="5" height="8" viewBox="0 0 5 8"><circle cx="2.5" cy="2.2" r="1.8" fill="#222"/><rect x="2" y="3" width="1" height="4" fill="#222"/></svg>
<svg style="position:absolute;left:29px;top:265px" width="12" height="9" viewBox="0 0 12 9"><rect x="0" y="3" width="1.6" height="2.4" fill="#9a9a9a"/><rect x="2.6" y="0.6" width="5" height="6.8" fill="#22a03e" rx="0.8"/><rect x="4" y="2" width="2.2" height="4" fill="#8ee09c"/><rect x="8.6" y="2" width="1" height="1.3" fill="#9a9a9a"/><rect x="8.6" y="4.8" width="1" height="1.3" fill="#9a9a9a"/></svg>
<svg style="position:absolute;left:261.6px;top:265px" width="12" height="9" viewBox="0 0 12 9"><rect x="0" y="3" width="1.6" height="2.4" fill="#9a9a9a"/><rect x="2.6" y="0.6" width="5" height="6.8" fill="#22a03e" rx="0.8"/><rect x="4" y="2" width="2.2" height="4" fill="#8ee09c"/><rect x="8.6" y="2" width="1" height="1.3" fill="#9a9a9a"/><rect x="8.6" y="4.8" width="1" height="1.3" fill="#9a9a9a"/></svg>
<div style="left:442px;top:267.8px;width:8px;height:2px;background:#bdbdbd;"></div>
<div style="left:533px;top:267.8px;width:8px;height:2px;background:#bdbdbd;"></div>
<div style="left:640px;top:267.8px;width:8px;height:2px;background:#bdbdbd;"></div>
<div style="left:755px;top:267.8px;width:8px;height:2px;background:#bdbdbd;"></div>
<div style="left:844px;top:267.8px;width:8px;height:2px;background:#bdbdbd;"></div>
<div style="left:958px;top:267.8px;width:8px;height:2px;background:#bdbdbd;"></div>
<div style="left:1059px;top:267.8px;width:8px;height:2px;background:#bdbdbd;"></div>
<div style="left:1143px;top:267.8px;width:8px;height:2px;background:#bdbdbd;"></div>
<svg style="position:absolute;left:1226px;top:265px" width="12" height="9" viewBox="0 0 12 9"><rect x="0" y="3" width="1.6" height="2.4" fill="#9a9a9a"/><rect x="2.6" y="0.6" width="5" height="6.8" fill="#22a03e" rx="0.8"/><rect x="4" y="2" width="2.2" height="4" fill="#8ee09c"/><rect x="8.6" y="2" width="1" height="1.3" fill="#9a9a9a"/><rect x="8.6" y="4.8" width="1" height="1.3" fill="#9a9a9a"/></svg>
<div style="left:6px;top:279px;width:19px;height:153px;background:repeating-linear-gradient(135deg,#ffffff 0px,#ffffff 2.0px,#f3f3f3 2.0px,#f3f3f3 2.83px);"></div>
<div style="left:6px;top:296px;width:19px;height:1px;background:#d2d2d2;"></div>
<div style="left:6px;top:314px;width:19px;height:1px;background:#d2d2d2;"></div>
<div style="left:6px;top:331px;width:19px;height:1px;background:#d2d2d2;"></div>
<div style="left:6px;top:350px;width:19px;height:1px;background:#d2d2d2;"></div>
<div style="left:6px;top:373px;width:19px;height:1px;background:#d2d2d2;"></div>
<div style="left:6px;top:391px;width:19px;height:1px;background:#d2d2d2;"></div>
<div style="left:6px;top:409px;width:19px;height:1px;background:#d2d2d2;"></div>
<div style="left:6px;top:432px;width:19px;height:1px;background:#d2d2d2;"></div>
<div style="left:25px;top:279px;width:1px;height:153px;background:#c4c4c4;"></div>
<div style="left:40px;top:296px;width:1px;height:54px;background:#d8d8d8;"></div>
<div style="left:40px;top:350px;width:1px;height:23px;background:#d8d8d8;"></div>
<div style="left:40px;top:409px;width:1px;height:23px;background:#d8d8d8;"></div>
<svg style="position:absolute;left:31px;top:286px" width="5" height="4" viewBox="0 0 5 4"><path d="M0 0H5L2.5 3Z" fill="#111"/></svg>
<div style="text-shadow:0.4px 0 0 #0c0cc8cc,0 0.25px 0 #0c0cc866;left:41.70px;top:281.27px;width:400px;height:13.02px;line-height:13.02px;text-align:left;font-size:9.3px;font-weight:bold;color:#0c0cc8;transform:scaleX(0.975);transform-origin:left center;">Tên nhóm: Rạch giá</div>
<svg style="position:absolute;left:31px;top:381px" width="5" height="4" viewBox="0 0 5 4"><path d="M0 0H5L2.5 3Z" fill="#111"/></svg>
<div style="text-shadow:0.4px 0 0 #0c0cc8cc,0 0.25px 0 #0c0cc866;left:41.70px;top:376.27px;width:400px;height:13.02px;line-height:13.02px;text-align:left;font-size:9.3px;font-weight:bold;color:#0c0cc8;transform:scaleX(0.975);transform-origin:left center;">Tên nhóm: Rạch sỏi</div>
<div style="left:40px;top:296px;width:1272px;height:18px;background:#fff;border-top:1px solid #d8d8d8;"></div>
<div style="left:259px;top:296px;width:1px;height:18px;background:#d8d8d8;"></div>
<div style="left:436px;top:296px;width:1px;height:18px;background:#d8d8d8;"></div>
<div style="left:527px;top:296px;width:1px;height:18px;background:#d8d8d8;"></div>
<div style="left:634px;top:296px;width:1px;height:18px;background:#d8d8d8;"></div>
<div style="left:749px;top:296px;width:1px;height:18px;background:#d8d8d8;"></div>
<div style="left:838px;top:296px;width:1px;height:18px;background:#d8d8d8;"></div>
<div style="left:952px;top:296px;width:1px;height:18px;background:#d8d8d8;"></div>
<div style="left:1053px;top:296px;width:1px;height:18px;background:#d8d8d8;"></div>
<div style="left:1137px;top:296px;width:1px;height:18px;background:#d8d8d8;"></div>
<div style="left:1222px;top:296px;width:1px;height:18px;background:#d8d8d8;"></div>
<div style="text-shadow:0.4px 0 0 #222222bb;left:43.30px;top:298.74px;width:400px;height:14.0px;line-height:14.0px;text-align:left;font-size:10px;font-weight:normal;color:#222;transform:scaleX(0.906);transform-origin:left center;">lam</div>
<div style="text-shadow:0.4px 0 0 #222222bb;left:262.30px;top:298.74px;width:400px;height:14.0px;line-height:14.0px;text-align:left;font-size:10px;font-weight:normal;color:#222;transform:scaleX(0.906);transform-origin:left center;">Lâm Cửa Hàng</div>
<div style="text-shadow:0.4px 0 0 #222222bb;left:125.00px;top:298.74px;width:400px;height:14.0px;line-height:14.0px;text-align:right;font-size:10px;font-weight:normal;color:#222;transform:scaleX(0.980);transform-origin:right center;">50,000,000</div>
<div style="text-shadow:0.4px 0 0 #222222bb;left:232.00px;top:298.74px;width:400px;height:14.0px;line-height:14.0px;text-align:right;font-size:10px;font-weight:normal;color:#222;transform:scaleX(0.980);transform-origin:right center;">2,343,000</div>
<div style="text-shadow:0.4px 0 0 #222222bb;left:347.00px;top:298.74px;width:400px;height:14.0px;line-height:14.0px;text-align:right;font-size:10px;font-weight:normal;color:#222;transform:scaleX(0.980);transform-origin:right center;">781,000</div>
<div style="text-shadow:0.4px 0 0 #222222bb;left:436.00px;top:298.74px;width:400px;height:14.0px;line-height:14.0px;text-align:right;font-size:10px;font-weight:normal;color:#222;transform:scaleX(0.980);transform-origin:right center;">51,562,000</div>
<div style="text-shadow:0.4px 0 0 #222222bb;left:550.00px;top:298.74px;width:400px;height:14.0px;line-height:14.0px;text-align:right;font-size:10px;font-weight:normal;color:#222;transform:scaleX(0.980);transform-origin:right center;">0</div>
<div style="text-shadow:0.4px 0 0 #222222bb;left:651.00px;top:298.74px;width:400px;height:14.0px;line-height:14.0px;text-align:right;font-size:10px;font-weight:normal;color:#222;transform:scaleX(0.980);transform-origin:right center;">0</div>
<div style="text-shadow:0.4px 0 0 #222222bb;left:735.00px;top:298.74px;width:400px;height:14.0px;line-height:14.0px;text-align:right;font-size:10px;font-weight:normal;color:#222;transform:scaleX(0.980);transform-origin:right center;">0</div>
<div style="text-shadow:0.4px 0 0 #222222bb;left:1140.30px;top:298.74px;width:400px;height:14.0px;line-height:14.0px;text-align:left;font-size:10px;font-weight:normal;color:#222;transform:scaleX(1.010);transform-origin:left center;">31/12/2023</div>
<div style="left:40px;top:314px;width:1272px;height:18px;background:#fff;border-top:1px solid #d8d8d8;"></div>
<div style="left:259px;top:314px;width:1px;height:18px;background:#d8d8d8;"></div>
<div style="left:436px;top:314px;width:1px;height:18px;background:#d8d8d8;"></div>
<div style="left:527px;top:314px;width:1px;height:18px;background:#d8d8d8;"></div>
<div style="left:634px;top:314px;width:1px;height:18px;background:#d8d8d8;"></div>
<div style="left:749px;top:314px;width:1px;height:18px;background:#d8d8d8;"></div>
<div style="left:838px;top:314px;width:1px;height:18px;background:#d8d8d8;"></div>
<div style="left:952px;top:314px;width:1px;height:18px;background:#d8d8d8;"></div>
<div style="left:1053px;top:314px;width:1px;height:18px;background:#d8d8d8;"></div>
<div style="left:1137px;top:314px;width:1px;height:18px;background:#d8d8d8;"></div>
<div style="left:1222px;top:314px;width:1px;height:18px;background:#d8d8d8;"></div>
<div style="text-shadow:0.4px 0 0 #222222bb;left:43.30px;top:316.74px;width:400px;height:14.0px;line-height:14.0px;text-align:left;font-size:10px;font-weight:normal;color:#222;transform:scaleX(0.906);transform-origin:left center;">lvk</div>
<div style="text-shadow:0.4px 0 0 #222222bb;left:262.30px;top:316.74px;width:400px;height:14.0px;line-height:14.0px;text-align:left;font-size:10px;font-weight:normal;color:#222;transform:scaleX(0.906);transform-origin:left center;">Lê Văn Kháng</div>
<div style="text-shadow:0.4px 0 0 #222222bb;left:125.00px;top:316.74px;width:400px;height:14.0px;line-height:14.0px;text-align:right;font-size:10px;font-weight:normal;color:#222;transform:scaleX(0.980);transform-origin:right center;">20,000,000</div>
<div style="text-shadow:0.4px 0 0 #222222bb;left:232.00px;top:316.74px;width:400px;height:14.0px;line-height:14.0px;text-align:right;font-size:10px;font-weight:normal;color:#222;transform:scaleX(0.980);transform-origin:right center;">27,775,000</div>
<div style="text-shadow:0.4px 0 0 #222222bb;left:347.00px;top:316.74px;width:400px;height:14.0px;line-height:14.0px;text-align:right;font-size:10px;font-weight:normal;color:#222;transform:scaleX(0.980);transform-origin:right center;">0</div>
<div style="text-shadow:0.4px 0 0 #222222bb;left:436.00px;top:316.74px;width:400px;height:14.0px;line-height:14.0px;text-align:right;font-size:10px;font-weight:normal;color:#222;transform:scaleX(0.980);transform-origin:right center;">47,775,000</div>
<div style="text-shadow:0.4px 0 0 #222222bb;left:550.00px;top:316.74px;width:400px;height:14.0px;line-height:14.0px;text-align:right;font-size:10px;font-weight:normal;color:#222;transform:scaleX(0.980);transform-origin:right center;">0</div>
<div style="text-shadow:0.4px 0 0 #222222bb;left:651.00px;top:316.74px;width:400px;height:14.0px;line-height:14.0px;text-align:right;font-size:10px;font-weight:normal;color:#222;transform:scaleX(0.980);transform-origin:right center;">0</div>
<div style="text-shadow:0.4px 0 0 #222222bb;left:735.00px;top:316.74px;width:400px;height:14.0px;line-height:14.0px;text-align:right;font-size:10px;font-weight:normal;color:#222;transform:scaleX(0.980);transform-origin:right center;">50,000,000</div>
<div style="text-shadow:0.4px 0 0 #222222bb;left:1140.30px;top:316.74px;width:400px;height:14.0px;line-height:14.0px;text-align:left;font-size:10px;font-weight:normal;color:#222;transform:scaleX(1.010);transform-origin:left center;">13/09/2023</div>
<div style="left:40px;top:331px;width:1272px;height:19px;background:linear-gradient(90deg,#ffff00 0px,#ffa500 636px,#ff4500 1272px);border-top:1px solid #d8d8d8;"></div>
<div style="left:259px;top:331px;width:1px;height:19px;background:rgba(120,120,120,0.14);"></div>
<div style="left:436px;top:331px;width:1px;height:19px;background:rgba(120,120,120,0.14);"></div>
<div style="left:527px;top:331px;width:1px;height:19px;background:rgba(120,120,120,0.14);"></div>
<div style="left:634px;top:331px;width:1px;height:19px;background:rgba(120,120,120,0.14);"></div>
<div style="left:749px;top:331px;width:1px;height:19px;background:rgba(120,120,120,0.14);"></div>
<div style="left:838px;top:331px;width:1px;height:19px;background:rgba(120,120,120,0.14);"></div>
<div style="left:952px;top:331px;width:1px;height:19px;background:rgba(120,120,120,0.14);"></div>
<div style="left:1053px;top:331px;width:1px;height:19px;background:rgba(120,120,120,0.14);"></div>
<div style="left:1137px;top:331px;width:1px;height:19px;background:rgba(120,120,120,0.14);"></div>
<div style="left:1222px;top:331px;width:1px;height:19px;background:rgba(120,120,120,0.14);"></div>
<div style="text-shadow:0.4px 0 0 #1e1e1ebb;left:43.30px;top:333.74px;width:400px;height:14.0px;line-height:14.0px;text-align:left;font-size:10px;font-weight:normal;color:#1e1e1e;transform:scaleX(0.906);transform-origin:left center;">KHTAM</div>
<div style="text-shadow:0.4px 0 0 #1e1e1ebb;left:262.30px;top:333.74px;width:400px;height:14.0px;line-height:14.0px;text-align:left;font-size:10px;font-weight:normal;color:#1e1e1e;transform:scaleX(0.906);transform-origin:left center;">Nguyễn Văn Tam</div>
<div style="text-shadow:0.4px 0 0 #1e1e1ebb;left:125.00px;top:333.74px;width:400px;height:14.0px;line-height:14.0px;text-align:right;font-size:10px;font-weight:normal;color:#1e1e1e;transform:scaleX(0.980);transform-origin:right center;">0</div>
<div style="text-shadow:0.4px 0 0 #1e1e1ebb;left:232.00px;top:333.74px;width:400px;height:14.0px;line-height:14.0px;text-align:right;font-size:10px;font-weight:normal;color:#1e1e1e;transform:scaleX(0.980);transform-origin:right center;">1,800,000</div>
<div style="text-shadow:0.4px 0 0 #1e1e1ebb;left:347.00px;top:333.74px;width:400px;height:14.0px;line-height:14.0px;text-align:right;font-size:10px;font-weight:normal;color:#1e1e1e;transform:scaleX(0.980);transform-origin:right center;">0</div>
<div style="text-shadow:0.4px 0 0 #1e1e1ebb;left:436.00px;top:333.74px;width:400px;height:14.0px;line-height:14.0px;text-align:right;font-size:10px;font-weight:normal;color:#1e1e1e;transform:scaleX(0.980);transform-origin:right center;">1,300,000</div>
<div style="text-shadow:0.4px 0 0 #1e1e1ebb;left:550.00px;top:333.74px;width:400px;height:14.0px;line-height:14.0px;text-align:right;font-size:10px;font-weight:normal;color:#1e1e1e;transform:scaleX(0.980);transform-origin:right center;">0</div>
<div style="text-shadow:0.4px 0 0 #1e1e1ebb;left:651.00px;top:333.74px;width:400px;height:14.0px;line-height:14.0px;text-align:right;font-size:10px;font-weight:normal;color:#1e1e1e;transform:scaleX(0.980);transform-origin:right center;">500,000</div>
<div style="text-shadow:0.4px 0 0 #1e1e1ebb;left:735.00px;top:333.74px;width:400px;height:14.0px;line-height:14.0px;text-align:right;font-size:10px;font-weight:normal;color:#1e1e1e;transform:scaleX(0.980);transform-origin:right center;">0</div>
<div style="text-shadow:0.4px 0 0 #1e1e1ebb;left:1140.30px;top:333.74px;width:400px;height:14.0px;line-height:14.0px;text-align:left;font-size:10px;font-weight:normal;color:#1e1e1e;transform:scaleX(1.010);transform-origin:left center;">07/07/2023</div>
<div style="text-shadow:0.4px 0 0 #1e1e1ebb;left:1225.30px;top:333.74px;width:400px;height:14.0px;line-height:14.0px;text-align:left;font-size:10px;font-weight:normal;color:#1e1e1e;transform:scaleX(0.906);transform-origin:left center;">Quá hạn</div>
<div style="left:40px;top:373px;width:1272px;height:1px;background:#dcdcdc;"></div>
<div style="left:41px;top:350px;width:1271px;height:23px;background:repeating-linear-gradient(135deg,#ffffff 0px,#ffffff 2.0px,#f3f3f3 2.0px,#f3f3f3 2.83px);border-top:1px solid #d4d4d4;"></div>
<div style="left:438px;top:352px;width:88px;height:20px;background:#fff;border:1px dotted #e2e2e2;"></div>
<div style="text-shadow:0.4px 0 0 #dd18ddcc,0 0.25px 0 #dd18dd66;left:124.20px;top:355.64px;width:400px;height:13.72px;line-height:13.72px;text-align:right;font-size:9.8px;font-weight:bold;color:#dd18dd;transform:scaleX(1.020);transform-origin:right center;">70,000,000</div>
<div style="left:529px;top:352px;width:104px;height:20px;background:#fff;border:1px dotted #e2e2e2;"></div>
<div style="text-shadow:0.4px 0 0 #dd18ddcc,0 0.25px 0 #dd18dd66;left:231.20px;top:355.64px;width:400px;height:13.72px;line-height:13.72px;text-align:right;font-size:9.8px;font-weight:bold;color:#dd18dd;transform:scaleX(1.020);transform-origin:right center;">31,918,000</div>
<div style="left:636px;top:352px;width:112px;height:20px;background:#fff;border:1px dotted #e2e2e2;"></div>
<div style="text-shadow:0.4px 0 0 #dd18ddcc,0 0.25px 0 #dd18dd66;left:346.20px;top:355.64px;width:400px;height:13.72px;line-height:13.72px;text-align:right;font-size:9.8px;font-weight:bold;color:#dd18dd;transform:scaleX(1.020);transform-origin:right center;">781,000</div>
<div style="left:751px;top:352px;width:86px;height:20px;background:#fff;border:1px dotted #e2e2e2;"></div>
<div style="text-shadow:0.4px 0 0 #dd18ddcc,0 0.25px 0 #dd18dd66;left:435.20px;top:355.64px;width:400px;height:13.72px;line-height:13.72px;text-align:right;font-size:9.8px;font-weight:bold;color:#dd18dd;transform:scaleX(1.020);transform-origin:right center;">100,637,000</div>
<div style="left:840px;top:352px;width:111px;height:20px;background:#fff;border:1px dotted #e2e2e2;"></div>
<div style="text-shadow:0.4px 0 0 #dd18ddcc,0 0.25px 0 #dd18dd66;left:549.20px;top:355.64px;width:400px;height:13.72px;line-height:13.72px;text-align:right;font-size:9.8px;font-weight:bold;color:#dd18dd;transform:scaleX(1.020);transform-origin:right center;">0</div>
<div style="left:954px;top:352px;width:98px;height:20px;background:#fff;border:1px dotted #e2e2e2;"></div>
<div style="text-shadow:0.4px 0 0 #dd18ddcc,0 0.25px 0 #dd18dd66;left:650.20px;top:355.64px;width:400px;height:13.72px;line-height:13.72px;text-align:right;font-size:9.8px;font-weight:bold;color:#dd18dd;transform:scaleX(1.020);transform-origin:right center;">500,000</div>
<div style="left:40px;top:391px;width:1272px;height:18px;background:#00ff7f;border-top:1px solid #d8d8d8;"></div>
<div style="left:259px;top:391px;width:1px;height:18px;background:rgba(255,255,255,0.45);"></div>
<div style="left:436px;top:391px;width:1px;height:18px;background:rgba(255,255,255,0.45);"></div>
<div style="left:527px;top:391px;width:1px;height:18px;background:rgba(255,255,255,0.45);"></div>
<div style="left:634px;top:391px;width:1px;height:18px;background:rgba(255,255,255,0.45);"></div>
<div style="left:749px;top:391px;width:1px;height:18px;background:rgba(255,255,255,0.45);"></div>
<div style="left:838px;top:391px;width:1px;height:18px;background:rgba(255,255,255,0.45);"></div>
<div style="left:952px;top:391px;width:1px;height:18px;background:rgba(255,255,255,0.45);"></div>
<div style="left:1053px;top:391px;width:1px;height:18px;background:rgba(255,255,255,0.45);"></div>
<div style="left:1137px;top:391px;width:1px;height:18px;background:rgba(255,255,255,0.45);"></div>
<div style="left:1222px;top:391px;width:1px;height:18px;background:rgba(255,255,255,0.45);"></div>
<div style="text-shadow:0.4px 0 0 #0b2dcccc,0 0.25px 0 #0b2dcc66;left:43.30px;top:393.84px;width:400px;height:14.0px;line-height:14.0px;text-align:left;font-size:10px;font-weight:bold;color:#0b2dcc;">tri</div>
<div style="text-shadow:0.4px 0 0 #0b2dcccc,0 0.25px 0 #0b2dcc66;left:262.30px;top:393.84px;width:400px;height:14.0px;line-height:14.0px;text-align:left;font-size:10px;font-weight:bold;color:#0b2dcc;">Võ Minh Trí</div>
<div style="text-shadow:0.4px 0 0 #0b2dcccc,0 0.25px 0 #0b2dcc66;left:125.40px;top:393.84px;width:400px;height:14.0px;line-height:14.0px;text-align:right;font-size:10px;font-weight:bold;color:#0b2dcc;transform:scaleX(1.090);transform-origin:right center;">0</div>
<div style="text-shadow:0.4px 0 0 #0b2dcccc,0 0.25px 0 #0b2dcc66;left:232.40px;top:393.84px;width:400px;height:14.0px;line-height:14.0px;text-align:right;font-size:10px;font-weight:bold;color:#0b2dcc;transform:scaleX(1.090);transform-origin:right center;">420,000</div>
<div style="text-shadow:0.4px 0 0 #0b2dcccc,0 0.25px 0 #0b2dcc66;left:347.40px;top:393.84px;width:400px;height:14.0px;line-height:14.0px;text-align:right;font-size:10px;font-weight:bold;color:#0b2dcc;transform:scaleX(1.090);transform-origin:right center;">0</div>
<div style="text-shadow:0.4px 0 0 #0b2dcccc,0 0.25px 0 #0b2dcc66;left:436.40px;top:393.84px;width:400px;height:14.0px;line-height:14.0px;text-align:right;font-size:10px;font-weight:bold;color:#0b2dcc;transform:scaleX(1.090);transform-origin:right center;">220,000</div>
<div style="text-shadow:0.4px 0 0 #0b2dcccc,0 0.25px 0 #0b2dcc66;left:550.40px;top:393.84px;width:400px;height:14.0px;line-height:14.0px;text-align:right;font-size:10px;font-weight:bold;color:#0b2dcc;transform:scaleX(1.090);transform-origin:right center;">0</div>
<div style="text-shadow:0.4px 0 0 #0b2dcccc,0 0.25px 0 #0b2dcc66;left:651.40px;top:393.84px;width:400px;height:14.0px;line-height:14.0px;text-align:right;font-size:10px;font-weight:bold;color:#0b2dcc;transform:scaleX(1.090);transform-origin:right center;">200,000</div>
<div style="text-shadow:0.4px 0 0 #0b2dcccc,0 0.25px 0 #0b2dcc66;left:735.40px;top:393.84px;width:400px;height:14.0px;line-height:14.0px;text-align:right;font-size:10px;font-weight:bold;color:#0b2dcc;transform:scaleX(1.090);transform-origin:right center;">60,000,000</div>
<div style="text-shadow:0.4px 0 0 #0b2dcccc,0 0.25px 0 #0b2dcc66;left:1140.30px;top:393.84px;width:400px;height:14.0px;line-height:14.0px;text-align:left;font-size:10px;font-weight:bold;color:#0b2dcc;transform:scaleX(1.200);transform-origin:left center;">12/01/2023</div>
<div style="text-shadow:0.4px 0 0 #0b2dcccc,0 0.25px 0 #0b2dcc66;left:1225.30px;top:393.84px;width:400px;height:14.0px;line-height:14.0px;text-align:left;font-size:10px;font-weight:bold;color:#0b2dcc;">Quá hạn</div>
<div style="left:528px;top:391px;width:106px;height:18px;background:linear-gradient(90deg,#fff200,#ffffb0);border:1px solid #d0a070;"></div>
<div style="text-shadow:0.4px 0 0 #d42a10cc,0 0.25px 0 #d42a1066;left:231.00px;top:393.54px;width:400px;height:14.0px;line-height:14.0px;text-align:right;font-size:10px;font-weight:bold;color:#d42a10;transform:scaleX(1.090);transform-origin:right center;">420,000</div>
<div style="left:41px;top:409px;width:1271px;height:23px;background:repeating-linear-gradient(135deg,#ffffff 0px,#ffffff 2.0px,#f3f3f3 2.0px,#f3f3f3 2.83px);border-top:1px solid #d4d4d4;"></div>
<div style="left:438px;top:411px;width:88px;height:20px;background:#fff;border:1px dotted #e2e2e2;"></div>
<div style="text-shadow:0.4px 0 0 #dd18ddcc,0 0.25px 0 #dd18dd66;left:124.20px;top:414.64px;width:400px;height:13.72px;line-height:13.72px;text-align:right;font-size:9.8px;font-weight:bold;color:#dd18dd;transform:scaleX(1.020);transform-origin:right center;">0</div>
<div style="left:529px;top:411px;width:104px;height:20px;background:#fff;border:1px dotted #e2e2e2;"></div>
<div style="text-shadow:0.4px 0 0 #dd18ddcc,0 0.25px 0 #dd18dd66;left:231.20px;top:414.64px;width:400px;height:13.72px;line-height:13.72px;text-align:right;font-size:9.8px;font-weight:bold;color:#dd18dd;transform:scaleX(1.020);transform-origin:right center;">420,000</div>
<div style="left:636px;top:411px;width:112px;height:20px;background:#fff;border:1px dotted #e2e2e2;"></div>
<div style="text-shadow:0.4px 0 0 #dd18ddcc,0 0.25px 0 #dd18dd66;left:346.20px;top:414.64px;width:400px;height:13.72px;line-height:13.72px;text-align:right;font-size:9.8px;font-weight:bold;color:#dd18dd;transform:scaleX(1.020);transform-origin:right center;">0</div>
<div style="left:751px;top:411px;width:86px;height:20px;background:#fff;border:1px dotted #e2e2e2;"></div>
<div style="text-shadow:0.4px 0 0 #dd18ddcc,0 0.25px 0 #dd18dd66;left:435.20px;top:414.64px;width:400px;height:13.72px;line-height:13.72px;text-align:right;font-size:9.8px;font-weight:bold;color:#dd18dd;transform:scaleX(1.020);transform-origin:right center;">220,000</div>
<div style="left:840px;top:411px;width:111px;height:20px;background:#fff;border:1px dotted #e2e2e2;"></div>
<div style="text-shadow:0.4px 0 0 #dd18ddcc,0 0.25px 0 #dd18dd66;left:549.20px;top:414.64px;width:400px;height:13.72px;line-height:13.72px;text-align:right;font-size:9.8px;font-weight:bold;color:#dd18dd;transform:scaleX(1.020);transform-origin:right center;">0</div>
<div style="left:954px;top:411px;width:98px;height:20px;background:#fff;border:1px dotted #e2e2e2;"></div>
<div style="text-shadow:0.4px 0 0 #dd18ddcc,0 0.25px 0 #dd18dd66;left:650.20px;top:414.64px;width:400px;height:13.72px;line-height:13.72px;text-align:right;font-size:9.8px;font-weight:bold;color:#dd18dd;transform:scaleX(1.020);transform-origin:right center;">200,000</div>
<div style="left:6px;top:432px;width:1306px;height:1px;background:#d6d6d6;"></div>
<svg style="position:absolute;left:9.5px;top:397.5px" width="4" height="6" viewBox="0 0 4 6"><path d="M0 0L3 3L0 6Z" fill="#111"/></svg>
<div style="left:6px;top:708px;width:1306px;height:23px;background:repeating-linear-gradient(135deg,#ffffff 0px,#ffffff 2.0px,#f3f3f3 2.0px,#f3f3f3 2.83px);border-top:1px solid #c2c2c2;"></div>
<div style="left:438px;top:710px;width:88px;height:20px;background:#fff;border:1px dotted #e2e2e2;"></div>
<div style="text-shadow:0.4px 0 0 #d41212cc,0 0.25px 0 #d4121266;left:122.80px;top:714.33px;width:400px;height:14.0px;line-height:14.0px;text-align:right;font-size:10px;font-weight:bold;color:#d41212;transform:scaleX(1.100);transform-origin:right center;">70,000,000</div>
<div style="left:529px;top:710px;width:104px;height:20px;background:#fff;border:1px dotted #e2e2e2;"></div>
<div style="text-shadow:0.4px 0 0 #d41212cc,0 0.25px 0 #d4121266;left:229.80px;top:714.33px;width:400px;height:14.0px;line-height:14.0px;text-align:right;font-size:10px;font-weight:bold;color:#d41212;transform:scaleX(1.100);transform-origin:right center;">32,338,000</div>
<div style="left:636px;top:710px;width:112px;height:20px;background:#fff;border:1px dotted #e2e2e2;"></div>
<div style="text-shadow:0.4px 0 0 #d41212cc,0 0.25px 0 #d4121266;left:344.80px;top:714.33px;width:400px;height:14.0px;line-height:14.0px;text-align:right;font-size:10px;font-weight:bold;color:#d41212;transform:scaleX(1.100);transform-origin:right center;">781,000</div>
<div style="left:751px;top:710px;width:86px;height:20px;background:#fff;border:1px dotted #e2e2e2;"></div>
<div style="text-shadow:0.4px 0 0 #d41212cc,0 0.25px 0 #d4121266;left:433.80px;top:714.33px;width:400px;height:14.0px;line-height:14.0px;text-align:right;font-size:10px;font-weight:bold;color:#d41212;transform:scaleX(1.100);transform-origin:right center;">100,857,000</div>
<div style="left:840px;top:710px;width:111px;height:20px;background:#fff;border:1px dotted #e2e2e2;"></div>
<div style="text-shadow:0.4px 0 0 #d41212cc,0 0.25px 0 #d4121266;left:547.80px;top:714.33px;width:400px;height:14.0px;line-height:14.0px;text-align:right;font-size:10px;font-weight:bold;color:#d41212;transform:scaleX(1.100);transform-origin:right center;">0</div>
<div style="left:954px;top:710px;width:98px;height:20px;background:#fff;border:1px dotted #e2e2e2;"></div>
<div style="text-shadow:0.4px 0 0 #d41212cc,0 0.25px 0 #d4121266;left:648.80px;top:714.33px;width:400px;height:14.0px;line-height:14.0px;text-align:right;font-size:10px;font-weight:bold;color:#d41212;transform:scaleX(1.100);transform-origin:right center;">700,000</div>
<div style="left:1px;top:168px;width:1px;height:571px;background:repeating-linear-gradient(180deg,#d6d6d6 0px,#d6d6d6 2px,transparent 2px,transparent 4px);"></div>
<div style="left:0px;top:739px;width:1320px;height:18px;background:#fff;"></div>
<div style="left:0px;top:757px;width:1320px;height:1px;background:#f4f4f4;"></div>
<div style="text-shadow:0.4px 0 0 #1a1a1acc,0 0.25px 0 #1a1a1a66;left:5.00px;top:744.74px;width:400px;height:10.92px;line-height:10.92px;text-align:left;font-size:7.8px;font-weight:bold;color:#1a1a1a;transform:scaleX(1.034);transform-origin:left center;">Chào mừng: Administrator đến với phần mềm MekongSoft</div>
<div style="left:239.3px;top:745px;width:1px;height:8px;background:#c0c0c0;"></div>
<div style="text-shadow:0.4px 0 0 #1a1a1acc,0 0.25px 0 #1a1a1a66;left:249.00px;top:744.74px;width:400px;height:10.92px;line-height:10.92px;text-align:left;font-size:7.8px;font-weight:bold;color:#1a1a1a;transform:scaleX(1.034);transform-origin:left center;">Version: 4.0.0</div>
<div style="left:310px;top:745px;width:1px;height:8px;background:#c0c0c0;"></div>
<div style="text-shadow:0.4px 0 0 #e01818cc,0 0.25px 0 #e0181866;left:320.00px;top:744.74px;width:400px;height:10.92px;line-height:10.92px;text-align:left;font-size:7.8px;font-weight:bold;color:#e01818;transform:scaleX(1.079);transform-origin:left center;">Ngày: 11/01/2024 9:04:40 SA</div>
<div style="left:1109px;top:741px;width:1px;height:15px;background:repeating-linear-gradient(180deg,#d6d6d6 0px,#d6d6d6 2px,transparent 2px,transparent 4px);"></div>
<div style="text-shadow:0.4px 0 0 #1a1a1acc,0 0.25px 0 #1a1a1a66;left:1116.40px;top:744.74px;width:400px;height:10.92px;line-height:10.92px;text-align:left;font-size:7.8px;font-weight:bold;color:#1a1a1a;transform:scaleX(1.042);transform-origin:left center;">@2023 MekongSoft. Thông tin hỗ trợ: 0901 000 508</div>
</body></html>
